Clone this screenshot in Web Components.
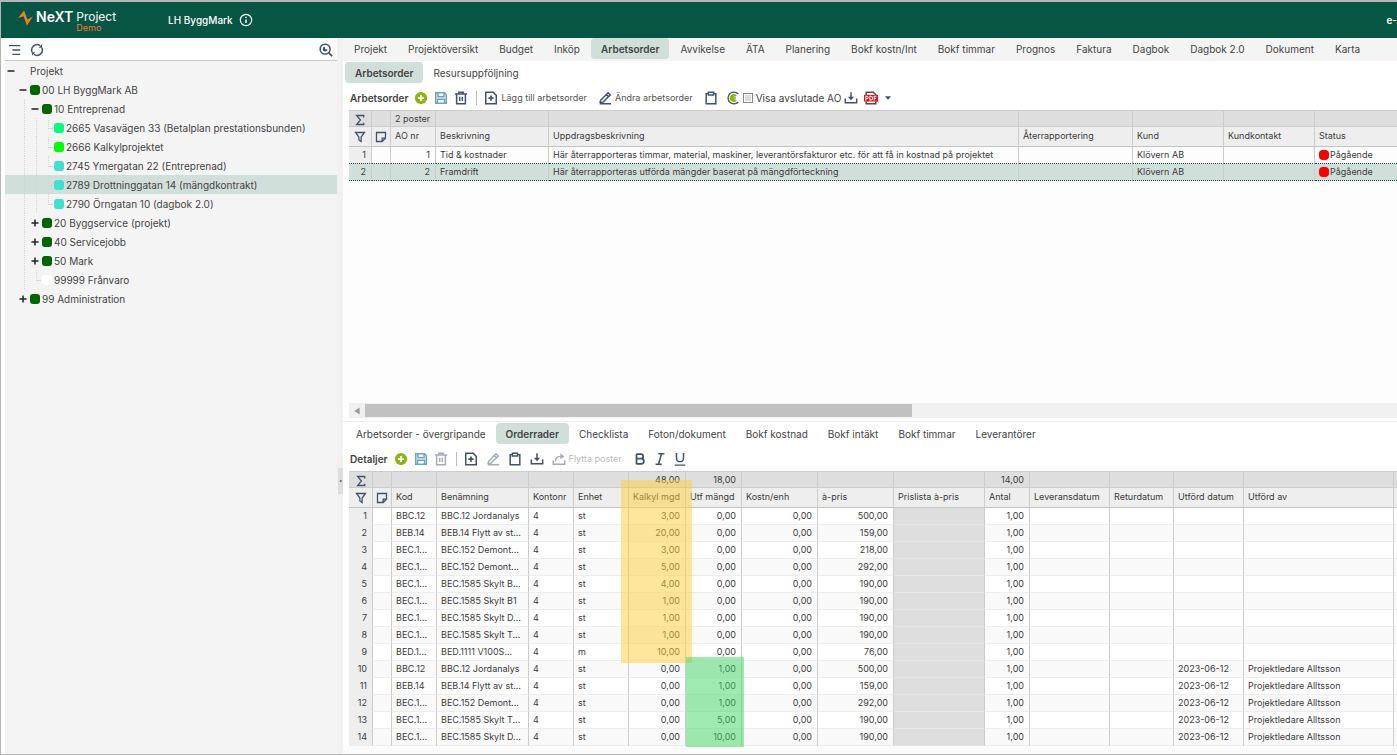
<!DOCTYPE html>
<html lang="sv">
<head>
<meta charset="utf-8">
<title>NEXT Project</title>
<style>
    body {
        margin: 0;
        font-family: Inter, "Liberation Sans", sans-serif;
        font-size: 10px;
        line-height: 16px;
        color: #444;
        --green: #075543;
        --soft: #d1dfdb;
        --panel: #f4f4f4;
        --ink: #42526b;
    }
</style>
</head>
<body>
<project-app></project-app>

<script>
const ICONS = {
    list: '<path d="M1 3h13M5 8h9M5 13h9"/>',
    refresh: '<path d="M2.4 10.500A6.200 6.200 0 0 1 11.500 2.900M13.600 5.500A6.200 6.200 0 0 1 4.500 13.100"/><path d="M13.800 1.500v4H9.800zM2.200 14.500v-4h4z" fill="currentColor" stroke="none"/>',
    search: '<circle cx="7" cy="7" r="5.700"/><path d="M7 4.200A2.800 2.800 0 1 0 9.800 7H7z" fill="currentColor" stroke="none"/><path d="M11.200 11.200 15 15" stroke-width="2"/>',
    info: '<circle cx="8" cy="8" r="6.500" stroke-width="1.300"/><path d="M8 7.300v4M8 4.300v1.500"/>',
    add: '<circle cx="8" cy="8" r="7" fill="#8db510" stroke="none"/><path d="M8 4.500v7M4.500 8h7" stroke="#fff" stroke-width="2"/>',
    save: '<path d="M2 2h10l2 2v10H2z" stroke="#6ba5c2"/><path d="M4.500 2v4.500h7V2M4 14V9.500h8V14" stroke="#6ba5c2"/>',
    trash: '<path d="M1 3.500h14M5.500 3V1.500h5V3M3 4v10.500h10V4M6.500 6.500v5M9.500 6.500v5"/>',
    docplus: '<path d="M2 1.500h8.500L14 5v9.500H2z"/><path d="M8 5v6M5 8h6" stroke-width="2"/>',
    pencil: '<path d="M3 10.500 11.500 2l2.500 2.500-8.500 8.500H2.500zM9.500 4l2.500 2.500M2 14.500h13"/>',
    clipboard: '<path d="M5 3H2.500v11.500h11V3H11M5 1.500h6v3H5z"/>',
    euro: '<path d="M14 3.500A6.700 6.700 0 1 0 14 12.500" stroke-width="1.500"/><path d="M11.500 5.500a3.600 3.600 0 1 0 0 5" fill="#8db510" stroke="#8db510" stroke-width="2"/><path d="M9.500 6.700h4M9.500 9.300h4" stroke="#fff" stroke-width="1"/>',
    download: '<path d="M1.500 8.500v5h13v-5M8 1.500v7"/><path d="M4.500 6.500h7L8 10.500z" fill="currentColor" stroke="none"/>',
    share: '<path d="M1.500 9.500v4.500h13V9.500M4 10.500c0-4 2-5.500 6-5.500"/><path d="M9.500 1.500 14 5 9.500 8.500z" fill="currentColor" stroke="none"/>',
    pdf: '<path d="M2.500 4.500V1.500h8L13.500 4v1M2.500 12v2.500h11V12"/><rect x="0" y="4.500" width="16" height="7.500" fill="#f00" stroke="none"/><path d="M2 10.800V6h1.300a1.300 1.300 0 0 1 0 2.700H2M6.700 6v4.300h1a2.100 2.100 0 0 0 0-4.300zM11.700 10.800V6h2.600M11.700 8.400h2.200" stroke="#fff" stroke-width="1.200"/>',
    filter: '<path d="M2 2h12L9.500 8v6l-3-2V8z"/>',
    note: '<path d="M2 2h12v7.500L9.500 14H2zM14 9.500H9.500V14"/>',
    sum: '<path d="M13 4.500V2H3.500L8.500 8l-5 6H13v-2.500"/>',
    bold: '<path d="M4 2v12M4 2.500h5a2.500 2.500 0 0 1 0 5.200H4M4 7.700h5.500a2.900 2.900 0 0 1 0 5.800H4" stroke-width="2"/>',
    italic: '<path d="M6 2h7M3 14h7M9.700 2 6.300 14"/>',
    underline: '<path d="M4 1v6a4 4 0 0 0 8 0V1M2 15h12"/>',
    caret: '<path d="M4.500 6h7L8 10z" fill="currentColor" stroke="none"/>',
    left: '<path d="M11 4v8L5 8z" fill="currentColor" stroke="none"/>',
    logo: '<path d="M0 8 6.500 0l3.500 9.500L16 6.500 9.500 16l-3.500-10z" fill="#f47a2a" stroke="none"/>'
};

class UiIcon extends HTMLElement {
    constructor() {
        super();
        this.attachShadow({ mode: 'open' });
    }

    connectedCallback() {
        this.shadowRoot.innerHTML = `
            <style>
                :host { display: inline-flex; width: 14px; height: 14px; flex: none; color: var(--icon, var(--ink)); }
                svg { width: 100%; height: 100%; }
            </style>
            <svg viewBox="0 0 16 16" fill="none" stroke="currentColor" stroke-width="1.700" aria-hidden="true">${ICONS[this.getAttribute('name')]}</svg>
        `;
    }
}

class AppHeader extends HTMLElement {
    constructor() {
        super();
        this.attachShadow({ mode: 'open' }).innerHTML = `
            <style>
                :host { display: flex; align-items: center; height: 36px; background: var(--green); color: #fff; padding-left: 17px; overflow: hidden; --icon: #fff; }
                .logo { display: flex; align-items: flex-start; gap: 3px; width: 150px; height: 20px; }
                .logo ui-icon { width: 15px; height: 16px; }
                b { font-size: 14px; line-height: 14px; font-weight: 600; }
                .product { display: flex; flex-direction: column; font-size: 12px; line-height: 14px; }
                .demo { font-size: 9px; line-height: 8px; color: #ee7a30; }
                .company { margin-right: 6px; font-size: 10px; font-weight: 500; }
                .end { margin-left: auto; font-weight: 600; }
            </style>
            <div class="logo"><ui-icon name="logo"></ui-icon><b>NeXT</b><div class="product"><span>Project</span><span class="demo">Demo</span></div></div>
            <span class="company">LH ByggMark</span>
            <ui-icon name="info"></ui-icon>
            <span class="end">e-</span>
        `;
    }
}

class TreeItem extends HTMLElement {
    constructor() {
        super();
        this.attachShadow({ mode: 'open' });
    }

    connectedCallback() {
        const level = Number(this.getAttribute('level'));
        const toggle = this.getAttribute('toggle') || '';
        let guides = '';
        for (let i = 0; i < level; i++) {
            guides += `<i class="${i ? 'guide' : ''}"></i>`;
        }
        this.shadowRoot.innerHTML = `
            <style>
                :host { display: flex; align-items: center; height: 19px; white-space: nowrap; }
                :host([selected]) { background: var(--soft); }
                i { width: 12px; height: 19px; flex: none; }
                .guide, .leaf { background: repeating-linear-gradient(#d4d4d4 0 1px, transparent 1px 2px) 7px 0 / 1px 100% no-repeat; }
                .leaf { background: repeating-linear-gradient(#d4d4d4 0 1px, transparent 1px 2px) 7px 0 / 1px 10px no-repeat, linear-gradient(#d4d4d4, #d4d4d4) 7px 10px / 5px 1px no-repeat; }
                .toggle { width: 13px; height: 19px; flex: none; border: 0; padding: 0; background-color: transparent; }
                svg { width: 12px; height: 19px; display: block; }
                .box { width: 10px; height: 10px; border-radius: 3px; margin-right: 2px; flex: none; background: ${this.getAttribute('color') || 'transparent'}; }
            </style>
            ${guides}
            ${toggle
                ? `<button class="toggle" aria-label="Växla"><svg viewBox="0 0 12 19" stroke="#222" stroke-width="1.500"><path d="M2.500 10h7${toggle === '+' ? 'M6 6.500v7' : ''}"/></svg></button>`
                : '<i class="toggle leaf"></i>'}
            <span class="box"></span>
            <slot></slot>
        `;
    }
}

class SideTree extends HTMLElement {
    constructor() {
        super();
        this.attachShadow({ mode: 'open' }).innerHTML = `
            <style>
                :host { display: block; background: var(--panel); }
                .bar { display: flex; align-items: center; height: 22px; padding: 1px 4px 0 3px; box-sizing: border-box; gap: 8px; background: #fff; }
                .line { border-top: 1px solid #ccc; }
                button { display: flex; border: 0; padding: 0; background: none; }
                .find { margin-left: auto; }
            </style>
            <div class="bar">
                <button aria-label="Lista"><ui-icon name="list"></ui-icon></button>
                <button aria-label="Uppdatera"><ui-icon name="refresh"></ui-icon></button>
                <button class="find" aria-label="Sök"><ui-icon name="search"></ui-icon></button>
            </div>
            <div class="line"><slot></slot></div>
        `;
    }
}

class TabBar extends HTMLElement {
    constructor() {
        super();
        this.attachShadow({ mode: 'open' });
    }

    connectedCallback() {
        const active = this.getAttribute('active');
        const links = this.getAttribute('tabs').split('|').map(tab =>
            `<a href="#" class="${tab === active ? 'active' : ''}">${tab}</a>`).join('');
        this.shadowRoot.innerHTML = `
            <style>
                :host { display: block; overflow: hidden; }
                nav { display: flex; gap: var(--tab-gap, 0); }
                a { padding: 3px 10px 2px; line-height: 16px; border-radius: 4px; color: #444; text-decoration: none; white-space: nowrap; }
                .active { background: var(--soft); font-weight: 600; }
            </style>
            <nav>${links}</nav>
        `;
    }
}

class ToolButton extends HTMLElement {
    constructor() {
        super();
        this.attachShadow({ mode: 'open' });
    }

    connectedCallback() {
        const off = this.hasAttribute('off');
        this.shadowRoot.innerHTML = `
            <style>
                :host { display: block; flex: none; }
                :host([wide]) { margin-right: 2px; }
                :host([labelled]) { margin-right: 8px; }
                button { display: flex; align-items: center; border: 0; padding: 0; background: none; font: inherit; font-size: 9px; color: ${off ? '#bbb' : '#555'}; ${off ? '--icon: #a3acb8;' : ''} }
                ui-icon { margin: 0 3px; }
            </style>
            <button aria-label="${this.getAttribute('icon')}" ${off ? 'disabled' : ''}><ui-icon name="${this.getAttribute('icon')}"></ui-icon><slot></slot></button>
        `;
        if (this.textContent) {
            this.shadowRoot.querySelector('button').removeAttribute('aria-label');
        }
    }
}

class ToolBar extends HTMLElement {
    constructor() {
        super();
        this.attachShadow({ mode: 'open' }).innerHTML = `
            <style>
                :host { display: flex; align-items: center; height: 25px; white-space: nowrap; }
                h2 { margin: 0 3px 0 1px; font-size: 10px; font-weight: 600; }
                ::slotted(hr) { width: 1px; height: 14px; border: 0; background: #bbb; margin: 0 4px 0 5px; }
                ::slotted(label) { display: flex; align-items: center; gap: 3px; }
            </style>
            <h2></h2><slot></slot>
        `;
    }

    connectedCallback() {
        this.shadowRoot.querySelector('h2').textContent = this.getAttribute('heading');
    }
}

class DataGrid extends HTMLElement {
    constructor() {
        super();
        this.attachShadow({ mode: 'open' });
    }

    // columns: { label, width, total, num, shade, dot }, rows: an array of cells for each row
    load(columns, rows, selected) {
        const cell = (value, column) => {
            const cls = [column.num ? 'num' : '', column.shade ? 'shade' : ''].join(' ').trim();
            const dot = column.dot ? '<span class="dot"></span>' : '';
            return `<td class="${cls}">${dot}${value}</td>`;
        };
        this.shadowRoot.innerHTML = `
            <style>
                :host { display: block; position: relative; font-size: 9px; color: #3c3c3c; }
                table { width: 100%; table-layout: fixed; border-collapse: separate; border-spacing: 0; border-top: 1px solid #ccc; }
                th, td { box-sizing: border-box; height: 17px; padding: 0 5px 0 4px; line-height: 16px; border-right: 1px solid #ccc; white-space: nowrap; overflow: hidden; text-align: left; font-weight: 400; }
                tr > :last-child { border-right: 0; }
                .sum th { height: 16px; line-height: 15px; background: #dedede; border-bottom: 1px solid #ccc; }
                .head th { height: 20px; padding-bottom: 2px; background: #eee; border-bottom: 1px solid #c4c4c4; }
                .sum .num, .num { text-align: right; }
                thead .icon { padding: 0; text-align: center; }
                th.icon ui-icon { width: 12px; height: 12px; vertical-align: middle; }
                tbody td, tbody th { border-bottom: 1px solid #eee; }
                tbody tr:nth-child(even) td { background: #f9f9f9; }
                tbody th { background: #eee; text-align: right; }
                tbody tr td.shade { background: #dedede; border-bottom-color: #e6e6e6; }
                tbody tr.selected > :is(th, td) { background: var(--soft); border-bottom: 1px dotted var(--green); }
                tbody tr.before > * { border-bottom: 1px dotted var(--green); }
                .dot { display: inline-block; width: 10px; height: 10px; border-radius: 4px; background: #f00; vertical-align: -2px; margin-right: 1px; }
            </style>
            <table>
                <colgroup><col style="width:${this.getAttribute('first')}px"><col style="width:19px">${columns.map(c => `<col${c.width ? ` style="width:${c.width}px"` : ''}>`).join('')}</colgroup>
                <thead>
                    <tr class="sum"><th class="icon"><ui-icon name="sum"></ui-icon></th><th></th>${columns.map(c => `<th class="${c.num ? 'num' : ''}">${c.total || ''}</th>`).join('')}</tr>
                    <tr class="head"><th class="icon"><ui-icon name="filter"></ui-icon></th><th class="icon"><ui-icon name="note"></ui-icon></th>${columns.map(c => `<th>${c.label}</th>`).join('')}</tr>
                </thead>
                <tbody>${rows.map((row, i) => `
                    <tr class="${i === selected ? 'selected' : i + 1 === selected ? 'before' : ''}"><th>${i + 1}</th><td></td>${columns.map((c, j) => cell(row[j] || '', c)).join('')}</tr>`).join('')}
                </tbody>
            </table>
            <slot></slot>
        `;
    }
}

class ScrollTrack extends HTMLElement {
    constructor() {
        super();
        this.attachShadow({ mode: 'open' }).innerHTML = `
            <style>
                :host { display: flex; align-items: center; height: 15px; background: #f0f0f0; --icon: #999; }
                ui-icon { margin: 0 1px; }
                .thumb { flex: 53; height: 13px; background: #c1c1c1; }
                .rest { flex: 47; }
            </style>
            <ui-icon name="left"></ui-icon><div class="thumb"></div><div class="rest"></div>
        `;
    }
}

class ProjectApp extends HTMLElement {
    constructor() {
        super();
        this.attachShadow({ mode: 'open' }).innerHTML = `
            <style>
                :host { display: flex; flex-direction: column; box-sizing: border-box; min-height: 100vh; border: solid #b5b5b5; border-width: 2px 0 1px 1px; overflow: hidden; }
                .body { flex: 1; display: grid; grid-template-columns: 332px 6px minmax(0, 1fr); padding-left: 4px; }
                .split { display: flex; align-items: center; justify-content: flex-end; background: #f1f1f1; --icon: #333; }
                .split ui-icon { width: 5px; height: 26px; background: #ddd; margin-top: 170px; }
                main { display: flex; flex-direction: column; background: #fff; }
                .top { background: var(--panel); height: 23px; --tab-gap: 1px; }
                .top tab-bar { margin-left: 1px; }
                .sub { margin: 1px 0 2px 2px; }
                tool-bar, data-grid, scroll-track { margin-left: 6px; }
                .upper { flex: 1; background: #fdfdfd; }
                .lower { margin-top: 3px; padding: 1px 0 2px 3px; border-top: 1px solid #eee; }
                .foot { height: 8px; background: #fbfbfb; }
                input { appearance: none; width: 10px; height: 10px; margin: 0; border: 1px solid #888; background: #ddd; box-shadow: inset 0 0 0 1px #fff; }
                .mark { position: absolute; }
                .planned { left: 272px; top: 9px; width: 71px; height: 183px; background: rgba(253, 205, 60, .5); }
                .done { left: 337px; top: 186px; width: 58px; height: 90px; background: rgba(62, 213, 100, .5); }
            </style>
            <app-header></app-header>
            <div class="body">
                <side-tree>
                    <tree-item level="0" toggle="-">Projekt</tree-item>
                    <tree-item level="1" toggle="-" color="#060">00 LH ByggMark AB</tree-item>
                    <tree-item level="2" toggle="-" color="#060">10 Entreprenad</tree-item>
                    <tree-item level="3" color="#00ff7f">2665 Vasavägen 33 (Betalplan prestationsbunden)</tree-item>
                    <tree-item level="3" color="#0f0">2666 Kalkylprojektet</tree-item>
                    <tree-item level="3" color="#40e0d0">2745 Ymergatan 22 (Entreprenad)</tree-item>
                    <tree-item level="3" color="#40e0d0" selected>2789 Drottninggatan 14 (mängdkontrakt)</tree-item>
                    <tree-item level="3" color="#40e0d0">2790 Örngatan 10 (dagbok 2.0)</tree-item>
                    <tree-item level="2" toggle="+" color="#060">20 Byggservice (projekt)</tree-item>
                    <tree-item level="2" toggle="+" color="#060">40 Servicejobb</tree-item>
                    <tree-item level="2" toggle="+" color="#060">50 Mark</tree-item>
                    <tree-item level="2" color="#fff">99999 Frånvaro</tree-item>
                    <tree-item level="1" toggle="+" color="#060">99 Administration</tree-item>
                </side-tree>
                <div class="split"><ui-icon name="left"></ui-icon></div>
                <main>
                    <div class="top"><tab-bar active="Arbetsorder" tabs="Projekt|Projektöversikt|Budget|Inköp|Arbetsorder|Avvikelse|ÄTA|Planering|Bokf kostn/Int|Bokf timmar|Prognos|Faktura|Dagbok|Dagbok 2.0|Dokument|Karta"></tab-bar></div>
                    <tab-bar class="sub" active="Arbetsorder" tabs="Arbetsorder|Resursuppföljning"></tab-bar>
                    <tool-bar heading="Arbetsorder">
                        <tool-button icon="add"></tool-button>
                        <tool-button icon="save"></tool-button>
                        <tool-button icon="trash"></tool-button>
                        <hr>
                        <tool-button icon="docplus" labelled>Lägg till arbetsorder</tool-button>
                        <tool-button icon="pencil" labelled>Ändra arbetsorder</tool-button>
                        <tool-button icon="clipboard" wide></tool-button>
                        <tool-button icon="euro"></tool-button>
                        <label><input type="checkbox">Visa avslutade AO</label>
                        <tool-button icon="download"></tool-button>
                        <tool-button icon="pdf"></tool-button>
                        <ui-icon name="caret"></ui-icon>
                    </tool-bar>
                    <div class="upper"><data-grid id="orders" first="23"></data-grid></div>
                    <scroll-track></scroll-track>
                    <tab-bar class="lower" active="Orderrader" tabs="Arbetsorder - övergripande|Orderrader|Checklista|Foton/dokument|Bokf kostnad|Bokf intäkt|Bokf timmar|Leverantörer"></tab-bar>
                    <tool-bar heading="Detaljer">
                        <tool-button icon="add"></tool-button>
                        <tool-button icon="save"></tool-button>
                        <tool-button icon="trash" off></tool-button>
                        <hr>
                        <tool-button icon="docplus" wide></tool-button>
                        <tool-button icon="pencil" off wide></tool-button>
                        <tool-button icon="clipboard" wide></tool-button>
                        <tool-button icon="download" wide></tool-button>
                        <tool-button icon="share" off labelled>Flytta poster</tool-button>
                        <tool-button icon="bold"></tool-button>
                        <tool-button icon="italic"></tool-button>
                        <tool-button icon="underline"></tool-button>
                    </tool-bar>
                    <data-grid id="lines" first="24">
                        <div class="mark planned"></div>
                        <div class="mark done"></div>
                    </data-grid>
                    <div class="foot"></div>
                </main>
            </div>
        `;
    }

    connectedCallback() {
        this.shadowRoot.getElementById('orders').load([
            { label: 'AO nr', width: 45, total: '2 poster', num: true },
            { label: 'Beskrivning', width: 113 },
            { label: 'Uppdragsbeskrivning', width: 470 },
            { label: 'Återrapportering', width: 114 },
            { label: 'Kund', width: 91 },
            { label: 'Kundkontakt', width: 91 },
            { label: 'Status', dot: true }
        ], [
            ['1', 'Tid &amp; kostnader', 'Här återrapporteras timmar, material, maskiner, leverantörsfakturor etc. för att få in kostnad på projektet', '', 'Klövern AB', '', 'Pågående'],
            ['2', 'Framdrift', 'Här återrapporteras utförda mängder baserat på mängdförteckning', '', 'Klövern AB', '', 'Pågående']
        ], 1);

        const lines = [
            ['BBC.12', 'BBC.12 Jordanalys', 'st', '3,00', '0,00', '500,00'],
            ['BEB.14', 'BEB.14 Flytt av st...', 'st', '20,00', '0,00', '159,00'],
            ['BEC.1...', 'BEC.152 Demont...', 'st', '3,00', '0,00', '218,00'],
            ['BEC.1...', 'BEC.152 Demont...', 'st', '5,00', '0,00', '292,00'],
            ['BEC.1...', 'BEC.1585 Skylt B...', 'st', '4,00', '0,00', '190,00'],
            ['BEC.1...', 'BEC.1585 Skylt B1', 'st', '1,00', '0,00', '190,00'],
            ['BEC.1...', 'BEC.1585 Skylt D...', 'st', '1,00', '0,00', '190,00'],
            ['BEC.1...', 'BEC.1585 Skylt T...', 'st', '1,00', '0,00', '190,00'],
            ['BED.1...', 'BED.1111 V100S...', 'm', '10,00', '0,00', '76,00'],
            ['BBC.12', 'BBC.12 Jordanalys', 'st', '0,00', '1,00', '500,00'],
            ['BEB.14', 'BEB.14 Flytt av st...', 'st', '0,00', '1,00', '159,00'],
            ['BEC.1...', 'BEC.152 Demont...', 'st', '0,00', '1,00', '292,00'],
            ['BEC.1...', 'BEC.1585 Skylt T...', 'st', '0,00', '5,00', '190,00'],
            ['BEC.1...', 'BEC.1585 Skylt D...', 'st', '0,00', '10,00', '190,00']
        ];
        this.shadowRoot.getElementById('lines').load([
            { label: 'Kod', width: 45 },
            { label: 'Benämning', width: 92 },
            { label: 'Kontonr', width: 45 },
            { label: 'Enhet', width: 55 },
            { label: 'Kalkyl mgd', width: 57, num: true, total: '48,00' },
            { label: 'Utf mängd', width: 56, num: true, total: '18,00' },
            { label: 'Kostn/enh', width: 76, num: true },
            { label: 'à-pris', width: 76, num: true },
            { label: 'Prislista à-pris', width: 91, shade: true },
            { label: 'Antal', width: 45, num: true, total: '14,00' },
            { label: 'Leveransdatum', width: 80 },
            { label: 'Returdatum', width: 64 },
            { label: 'Utförd datum', width: 70 },
            { label: 'Utförd av', width: 150 },
            { label: '' }
        ], lines.map(([kod, name, unit, planned, done, price], i) => [
            kod, name, '4', unit, planned, done, '0,00', price, '', '1,00', '', '',
            i > 8 ? '2023-06-12' : '', i > 8 ? 'Projektledare Alltsson' : ''
        ]));
    }
}

customElements.define('ui-icon', UiIcon);
customElements.define('app-header', AppHeader);
customElements.define('tree-item', TreeItem);
customElements.define('side-tree', SideTree);
customElements.define('tab-bar', TabBar);
customElements.define('tool-button', ToolButton);
customElements.define('tool-bar', ToolBar);
customElements.define('data-grid', DataGrid);
customElements.define('scroll-track', ScrollTrack);
customElements.define('project-app', ProjectApp);
</script>
</body>
</html>
